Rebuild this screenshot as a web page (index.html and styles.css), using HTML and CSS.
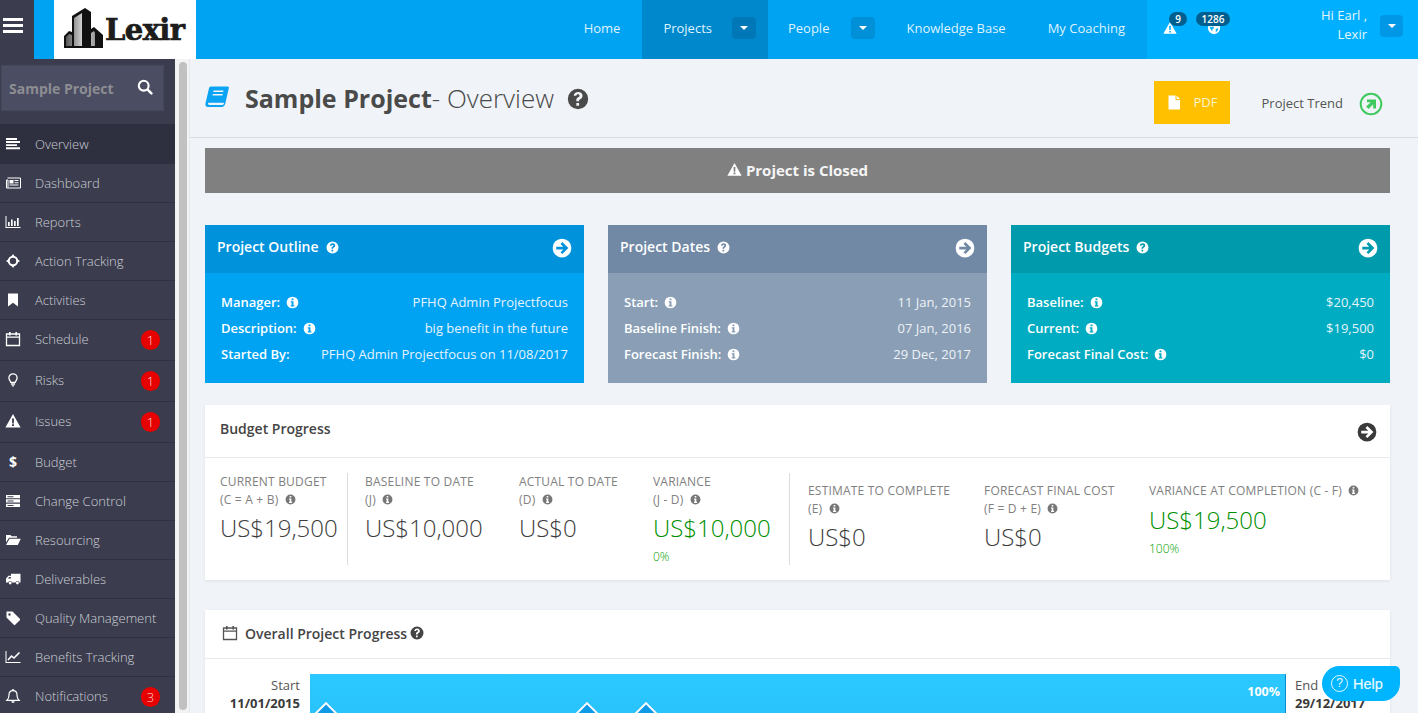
FILE: index.html
```html
<!DOCTYPE html>
<html lang="en">
<head>
<meta charset="utf-8">
<title>Sample Project - Overview</title>
<link rel="stylesheet" href="styles.css">
</head>
<body>
<svg class="defs" width="0" height="0" aria-hidden="true">
  <symbol id="i-info" viewBox="0 0 16 16"><path fill="currentColor" fill-rule="evenodd" d="M8 .8a7.2 7.2 0 1 0 0 14.4A7.2 7.2 0 1 0 8 .8zM6.8 3h2.4v2.2H6.8zM5.8 6.4h3.4v5h1.1v1.6H5.8v-1.6h1V8H5.8z"/></symbol>
  <symbol id="i-q" viewBox="0 0 16 16"><path fill="currentColor" fill-rule="evenodd" d="M8 .6a7.4 7.4 0 1 0 0 14.8A7.4 7.4 0 1 0 8 .6zM4.9 5.7C5 4 6.300 2.900 8.200 2.900c1.800 0 3.100 1.100 3.100 2.700 0 1.400-.9 2-1.700 2.500-.6.300-.8.600-.8 1v.5H6.800v-.8c0-1 .6-1.600 1.300-2 .6-.4 1-.6 1-1.200 0-.6-.5-1-1.100-1-.7 0-1.100.4-1.200 1.100zM6.800 10.900h2v2h-2z"/></symbol>
  <symbol id="i-arrow" viewBox="0 0 16 16"><path fill="currentColor" fill-rule="evenodd" d="M8 .5a7.500 7.500 0 1 0 0 15A7.500 7.500 0 1 0 8 .5zM8.300 3.200L13.100 8l-4.800 4.800-1.500-1.500 2.200-2.200H3.400V6.900H9L6.800 4.700z"/></symbol>
  <symbol id="i-warn" viewBox="0 0 16 16"><path fill="currentColor" fill-rule="evenodd" d="M8 1L15.600 14.600H.4zM7 5.400l.2 5h1.600l.2-5zM7 11.300v1.800h2v-1.800z"/></symbol>
  <symbol id="i-cal" viewBox="0 0 16 16"><path fill="none" stroke="currentColor" stroke-width="1.300" d="M1.500 3h13v11.500h-13zM1.500 6.200h13"/><path fill="currentColor" d="M4 1h1.600v3.400H4zM10.400 1H12v3.400h-1.600z"/></symbol>
  <symbol id="i-bars" viewBox="0 0 16 16"><path fill="currentColor" d="M1 2h11v1.900H1zM1 5.100h14V7H1zM1 8.200h11v1.900H1zM1 11.300h14v1.900H1z"/></symbol>
  <symbol id="i-news" viewBox="0 0 16 16"><path fill="none" stroke="currentColor" stroke-width="1" d="M2.500 3h13v10h-14V5h1.500v7.500"/><path fill="currentColor" d="M4.500 5h4v3.500h-4zM9.500 5h4v1h-4zM9.500 7.300h4v1h-4zM4.500 9.600h9v1h-9z"/></symbol>
  <symbol id="i-chart" viewBox="0 0 16 16"><path fill="currentColor" d="M.5 2h1v11h14v1H.5zM3 8h1.700v4H3zM6 5.500h1.700V12H6zM9 7h1.700v5H9zM12 4h1.700v8H12z"/></symbol>
  <symbol id="i-cross" viewBox="0 0 16 16"><circle cx="8" cy="8" r="4.200" fill="none" stroke="currentColor" stroke-width="2"/><path fill="currentColor" d="M8 1l2 3H6zM8 15l-2-3h4zM1 8l3-2v4zM15 8l-3 2V6z"/></symbol>
  <symbol id="i-mark" viewBox="0 0 16 16"><path fill="currentColor" d="M3 1.500h10v13L8 10.700l-5 3.800z"/></symbol>
  <symbol id="i-bulb" viewBox="0 0 16 16"><path fill="none" stroke="currentColor" stroke-width="1.300" d="M5.800 10.300C5.500 9 3.900 8 3.900 5.800 3.900 3.500 5.700 1.800 8 1.800s4.100 1.700 4.100 4c0 2.200-1.600 3.200-1.900 4.500z"/><path fill="currentColor" d="M5.900 11.300h4.200v1.400H5.900zM6.600 13.300h2.800l-.6 1.200H7.200z"/></symbol>
  <symbol id="i-server" viewBox="0 0 16 16"><path fill="currentColor" d="M1 2h14v3.300H1zM1 6.300h14v3.300H1zM1 10.700h14V14H1z"/><path fill="#3b3d4e" d="M2.500 3.200h6v1h-6zM2.500 7.500h6v1h-6zM2.500 11.900h6v1h-6z"/></symbol>
  <symbol id="i-folder" viewBox="0 0 16 16"><path fill="currentColor" d="M1 3h4.500l1.200 1.300H12v1.500H4L1 10.500zM4.600 6.800H15.800L12.800 13H1z"/></symbol>
  <symbol id="i-truck" viewBox="0 0 16 16"><path fill="currentColor" d="M6 2.800h9.500v8.700h-1.200a1.900 1.900 0 0 0-3.700 0H7a1.900 1.900 0 0 0-3.700 0H1V7.500l2.500-2.700H6zM2.700 7.600h3.200V5.900H4.200z"/><circle cx="5.200" cy="12" r="1.400" fill="currentColor"/><circle cx="12.400" cy="12" r="1.400" fill="currentColor"/></symbol>
  <symbol id="i-tag" viewBox="0 0 16 16"><path fill="currentColor" fill-rule="evenodd" d="M1.500 1.500h6l7.300 7.300a1 1 0 0 1 0 1.400l-4.600 4.600a1 1 0 0 1-1.400 0L1.500 7.500zM4.500 3.300a1.200 1.200 0 1 0 0 2.400 1.200 1.200 0 0 0 0-2.400z"/></symbol>
  <symbol id="i-line" viewBox="0 0 16 16"><path fill="currentColor" d="M.5 2h1v11h14v1H.5z"/><path fill="none" stroke="currentColor" stroke-width="1.600" d="M3 11l3.500-4 2.500 2 5.500-5.500"/></symbol>
  <symbol id="i-bell" viewBox="0 0 16 16"><path fill="none" stroke="currentColor" stroke-width="1.200" d="M2 12.300c1.500-1.400 2-2.600 2-5.300 0-2.500 1.700-4.300 4-4.300s4 1.800 4 4.300c0 2.700.5 3.900 2 5.300z"/><path fill="currentColor" d="M7.200 1h1.600v1.500H7.200zM6.300 13.300h3.400A1.700 1.700 0 0 1 6.300 13.300z"/></symbol>
  <symbol id="i-search" viewBox="0 0 16 16"><circle cx="6.700" cy="6.700" r="4.900" fill="none" stroke="currentColor" stroke-width="2.100"/><path fill="none" stroke="currentColor" stroke-width="2.500" stroke-linecap="round" d="M10.600 10.600l3.800 3.800"/></symbol>
  <symbol id="i-globe" viewBox="0 0 16 16"><path fill="currentColor" fill-rule="evenodd" d="M8 1a7 7 0 1 0 0 14A7 7 0 1 0 8 1zM3 6l2 1 2-1 1 2-2 2v2L4 9zM10 9l3-1-1 3-2 2z"/></symbol>
  <symbol id="i-file" viewBox="0 0 16 16"><path fill="currentColor" d="M2.500 1h7v4.500H14V15H2.500zM10.500 1l3.500 3.500h-3.500z"/></symbol>
  <symbol id="i-up" viewBox="0 0 24 24"><circle cx="12" cy="12" r="10.300" fill="none" stroke="currentColor" stroke-width="2"/><path fill="currentColor" d="M8 7.500h9v9h-2.800v-4.300l-4.700 4.700-2.400-2.400 4.700-4.200H8z"/></symbol>
</svg>

<div class="app">
  <header class="topbar">
    <button class="burger" aria-label="Menu"><span></span><span></span><span></span></button>
    <div class="brand-gap"></div>
    <div class="logo">
      <svg class="logo-mark" viewBox="0 0 40 40" width="40" height="40" aria-hidden="true">
        <defs><linearGradient id="glass" x1="0" x2="1" y1="0" y2="0"><stop offset="0" stop-color="#555"/><stop offset=".6" stop-color="#ddd"/><stop offset="1" stop-color="#999"/></linearGradient></defs>
        <path fill="#111" d="M0 28l5-5 3 1V8L21 0l6 4v17l3-2 9 8v13H0z"/>
        <path fill="url(#glass)" d="M2 29l3-3 3 1v11H2zM10 10l8-5v33h-8zM27 25l3-2 1 2v13h-4z"/>
      </svg>
      <span class="logo-text">Lexir</span>
    </div>
    <div class="top-space"></div>
    <nav class="nav">
      <a class="nav-item nav-home">Home</a>
      <a class="nav-item nav-item-drop is-active">Projects <span class="caret-btn"><i></i></span></a>
      <a class="nav-item nav-item-drop nav-people">People <span class="caret-btn"><i></i></span></a>
      <a class="nav-item">Knowledge Base</a>
      <a class="nav-item nav-last">My Coaching</a>
    </nav>
    <div class="top-right">
      <div class="alert">
        <svg class="alert-icon"><use href="#i-warn"/></svg>
        <span class="pill pill-a">9</span>
      </div>
      <div class="alert alert-globe">
        <svg class="alert-icon"><use href="#i-globe"/></svg>
        <span class="pill pill-b">1286</span>
      </div>
      <div class="user"><span>Hi Earl ,</span><span>Lexir</span></div>
      <span class="caret-btn caret-user"><i></i></span>
    </div>
  </header>

  <div class="body">
    <aside class="sidebar">
      <div class="search"><span>Sample Project</span><svg class="search-icon"><use href="#i-search"/></svg></div>
      <ul class="menu">
        <li class="menu-item is-current"><svg class="mi"><use href="#i-bars"/></svg>Overview</li>
        <li class="menu-item"><svg class="mi"><use href="#i-news"/></svg>Dashboard</li>
        <li class="menu-item"><svg class="mi"><use href="#i-chart"/></svg>Reports</li>
        <li class="menu-item"><svg class="mi"><use href="#i-cross"/></svg>Action Tracking</li>
        <li class="menu-item"><svg class="mi"><use href="#i-mark"/></svg>Activities</li>
        <li class="menu-item has-badge"><svg class="mi"><use href="#i-cal"/></svg>Schedule<b class="badge">1</b></li>
        <li class="menu-item has-badge"><svg class="mi"><use href="#i-bulb"/></svg>Risks<b class="badge">1</b></li>
        <li class="menu-item has-badge"><svg class="mi"><use href="#i-warn"/></svg>Issues<b class="badge">1</b></li>
        <li class="menu-item"><span class="mi mi-text">$</span>Budget</li>
        <li class="menu-item"><svg class="mi"><use href="#i-server"/></svg>Change Control</li>
        <li class="menu-item"><svg class="mi"><use href="#i-folder"/></svg>Resourcing</li>
        <li class="menu-item"><svg class="mi"><use href="#i-truck"/></svg>Deliverables</li>
        <li class="menu-item"><svg class="mi"><use href="#i-tag"/></svg>Quality Management</li>
        <li class="menu-item"><svg class="mi"><use href="#i-line"/></svg>Benefits Tracking</li>
        <li class="menu-item has-badge"><svg class="mi"><use href="#i-bell"/></svg>Notifications<b class="badge">3</b></li>
      </ul>
    </aside>
    <div class="scrolltrack"><div class="scrollthumb"></div></div>

    <main class="main">
      <div class="titlebar">
        <svg class="title-book" viewBox="0 0 24 22" aria-hidden="true"><path fill="#0ba3f3" d="M6 .5h16.500c1 0 1.500.7 1.300 1.700l-3.500 15.300c-.4 1.800-1.700 3.500-3.800 3.500H3C.9 21 0 19.300.5 17.300L4 2.300C4.300 1.200 5 .5 6 .5zM3.200 16.800c-.4 1.300.1 2.200 1.200 2.200h12.800c.9 0 1.500-.6 1.700-1.500l.1-.7zM8.500 4.500l-.3 1.400h10l.3-1.400zM7.800 8l-.3 1.400h10L17.800 8z" fill-rule="evenodd"/></svg>
        <h1 class="title"><strong>Sample Project</strong>- Overview</h1>
        <svg class="title-q"><use href="#i-q"/></svg>
        <div class="title-space"></div>
        <button class="pdf"><svg class="pdf-icon"><use href="#i-file"/></svg>PDF</button>
        <span class="trend">Project Trend</span>
        <svg class="trend-icon"><use href="#i-up"/></svg>
      </div>

      <div class="content">
        <div class="closed"><svg class="closed-icon"><use href="#i-warn"/></svg>Project is Closed</div>

        <section class="cards">
          <article class="card card-blue">
            <header class="card-head"><span>Project Outline</span><svg class="ci-q"><use href="#i-q"/></svg><svg class="ci-arrow"><use href="#i-arrow"/></svg></header>
            <dl class="card-body">
              <div class="row"><dt>Manager: <svg class="ci-i"><use href="#i-info"/></svg></dt><dd>PFHQ Admin Projectfocus</dd></div>
              <div class="row"><dt>Description: <svg class="ci-i"><use href="#i-info"/></svg></dt><dd>big benefit in the future</dd></div>
              <div class="row"><dt>Started By:</dt><dd>PFHQ Admin Projectfocus on 11/08/2017</dd></div>
            </dl>
          </article>
          <article class="card card-slate">
            <header class="card-head"><span>Project Dates</span><svg class="ci-q"><use href="#i-q"/></svg><svg class="ci-arrow"><use href="#i-arrow"/></svg></header>
            <dl class="card-body">
              <div class="row"><dt>Start: <svg class="ci-i"><use href="#i-info"/></svg></dt><dd>11 Jan, 2015</dd></div>
              <div class="row"><dt>Baseline Finish: <svg class="ci-i"><use href="#i-info"/></svg></dt><dd>07 Jan, 2016</dd></div>
              <div class="row"><dt>Forecast Finish: <svg class="ci-i"><use href="#i-info"/></svg></dt><dd>29 Dec, 2017</dd></div>
            </dl>
          </article>
          <article class="card card-teal">
            <header class="card-head"><span>Project Budgets</span><svg class="ci-q"><use href="#i-q"/></svg><svg class="ci-arrow"><use href="#i-arrow"/></svg></header>
            <dl class="card-body">
              <div class="row"><dt>Baseline: <svg class="ci-i"><use href="#i-info"/></svg></dt><dd>$20,450</dd></div>
              <div class="row"><dt>Current: <svg class="ci-i"><use href="#i-info"/></svg></dt><dd>$19,500</dd></div>
              <div class="row"><dt>Forecast Final Cost: <svg class="ci-i"><use href="#i-info"/></svg></dt><dd>$0</dd></div>
            </dl>
          </article>
        </section>

        <section class="panel">
          <header class="panel-head"><span>Budget Progress</span><svg class="panel-arrow"><use href="#i-arrow"/></svg></header>
          <div class="stats">
            <div class="stat stat-1"><p class="stat-label">CURRENT BUDGET<br>(C = A + B) <svg class="si"><use href="#i-info"/></svg></p><p class="stat-value">US$19,500</p></div>
            <div class="stat stat-2"><p class="stat-label">BASELINE TO DATE<br>(J) <svg class="si"><use href="#i-info"/></svg></p><p class="stat-value">US$10,000</p></div>
            <div class="stat stat-3"><p class="stat-label">ACTUAL TO DATE<br>(D) <svg class="si"><use href="#i-info"/></svg></p><p class="stat-value">US$0</p></div>
            <div class="stat stat-4"><p class="stat-label">VARIANCE<br>(J - D) <svg class="si"><use href="#i-info"/></svg></p><p class="stat-value is-good">US$10,000</p><p class="stat-pct">0%</p></div>
            <div class="stat stat-5"><p class="stat-label">ESTIMATE TO COMPLETE<br>(E) <svg class="si"><use href="#i-info"/></svg></p><p class="stat-value">US$0</p></div>
            <div class="stat stat-6"><p class="stat-label">FORECAST FINAL COST<br>(F = D + E) <svg class="si"><use href="#i-info"/></svg></p><p class="stat-value">US$0</p></div>
            <div class="stat stat-7"><p class="stat-label">VARIANCE AT COMPLETION (C - F) <svg class="si"><use href="#i-info"/></svg></p><p class="stat-value is-good">US$19,500</p><p class="stat-pct">100%</p></div>
          </div>
        </section>

        <section class="panel panel-progress">
          <header class="panel-head panel-head-b"><svg class="pg-cal"><use href="#i-cal"/></svg><span>Overall Project Progress</span><svg class="pg-q"><use href="#i-q"/></svg></header>
          <div class="timeline">
            <div class="tl-date tl-start"><span>Start</span><b>11/01/2015</b></div>
            <div class="tl-bar">
              <span class="tl-pct">100%</span>
              <i class="diamond diamond-a"></i><i class="diamond diamond-b"></i><i class="diamond diamond-c"></i>
            </div>
            <div class="tl-date tl-end"><span>End</span><b>29/12/2017</b></div>
          </div>
        </section>
      </div>
    </main>
  </div>

  <button class="help"><span class="help-q">?</span>Help</button>
</div>
</body>
</html>
```

FILE: styles.css
```css
* { box-sizing: border-box; }
html, body { margin: 0; padding: 0; height: 100%; overflow: hidden; }
body { font-family: "Open Sans", "Liberation Sans", sans-serif; font-size: 13px; color: #555; background: #f0f4f8; }
.defs { position: absolute; }
p, h1, dl, dd, ul { margin: 0; padding: 0; }
.app { height: 713px; display: flex; flex-direction: column; position: relative; overflow: hidden; }

/* top bar */
.topbar { height: 59px; flex: none; display: flex; background: #00a2f2; }
.burger { width: 34px; flex: none; background: #3b3d4e; border: 0; padding: 18px 7px 0 3px; display: flex; flex-direction: column; gap: 3px; }
.burger span { display: block; height: 3px; background: #fff; width: 20px; }
.brand-gap { width: 20px; flex: none; }
.logo { width: 142px; flex: none; background: #fff; display: flex; align-items: center; padding: 7px 0 0 10px; }
.logo-mark { flex: none; width: 40px; height: 40px; margin-top: -10px; }
.logo-text { font-family: "DejaVu Serif", serif; font-weight: 700; font-size: 29px; color: #1c1c1c; letter-spacing: -.6px; margin-left: 1px; -webkit-text-stroke: .7px #1c1c1c; margin-top: -7px; }
.top-space { flex: 1; }
.nav { display: flex; flex: none; }
.nav-item { display: flex; align-items: center; padding: 0 21px 4px; color: #dff3ff; font-size: 13px; }
.nav-home { padding-right: 22px; }
.nav-item-drop { padding: 0 12px 4px 21px; }
.nav-people { padding: 0 10px 4px 20px; }
.nav-last { padding-right: 22px; }
.nav-item.is-active { background: #0088cc; }
.caret-btn { display: inline-flex; align-items: center; justify-content: center; width: 24px; height: 22px; border-radius: 4px; background: #0090d8; margin-left: 20px; }
.nav-people .caret-btn { margin-left: 22px; }
.is-active .caret-btn { background: #0077b6; }
.caret-btn i { display: block; border: 4px solid transparent; border-top: 4px solid #fff; border-bottom: 0; width: 0; height: 0; }
.top-right { width: 271px; flex: none; background: #00b0ff; display: flex; position: relative; padding-left: 16px; }
.alert { position: relative; width: 44px; }
.alert-icon { position: absolute; left: 0; top: 21px; width: 14px; height: 14px; color: #fff; }
.pill { position: absolute; top: 12px; height: 14px; border-radius: 7px; background: #005f8f; color: #fff; font-size: 10px; font-weight: 600; line-height: 14px; text-align: center; }
.pill-a { left: 6px; width: 18px; }
.pill-b { left: -11px; width: 34px; }
.user { width: 116px; display: flex; flex-direction: column; align-items: flex-end; padding-top: 6px; color: #e3f5ff; font-size: 13px; line-height: 19px; }
.caret-user { position: absolute; left: 233px; top: 15px; margin: 0; background: #0098e6; width: 23px; }

/* layout */
.body { flex: 1; display: flex; min-height: 0; }
.sidebar { width: 175px; flex: none; background: #3b3d4e; padding-top: 6px; overflow: hidden; }
.search { margin-left: 1px; width: 163px; height: 46px; background: #4b4d63; border: 1px solid #44465a; display: flex; align-items: center; justify-content: space-between; padding: 0 10px 0 7px; color: #8d8d92; font-weight: 700; font-size: 14px; }
.search-icon { width: 16px; height: 16px; color: #fff; margin-top: -2px; }
.menu { list-style: none; margin-top: 13px; }
.menu-item { height: 39px; display: flex; align-items: center; color: #ccced6; font-weight: 300; font-size: 13px; border-bottom: 1px solid #2f3141; position: relative; }
.menu-item.has-badge { height: 41px; padding-bottom: 2px; }
.menu-item.is-current { background: #2e3040; height: 40px; }
.mi { width: 16px; height: 16px; flex: none; margin: 0 14px 0 5px; color: #fff; }
.mi-text { display: block; text-align: center; font-weight: 700; font-size: 14px; line-height: 16px; }
.badge { margin: 2px 15px 0 auto; width: 19px; height: 20px; border-radius: 10px; background: #e60000; color: #ffd9d9; font-weight: 300; font-size: 13px; line-height: 20px; text-align: center; }
.scrolltrack { width: 15px; flex: none; background: #f3f3f3; border-right: 1px solid #e6e8ea; padding: 3px 2px 0 4px; }
.scrollthumb { height: 648px; background: #c1c1c1; border-radius: 4px; }
.main { flex: 1; min-width: 0; overflow: hidden; }

/* title bar */
.titlebar { height: 79px; border-bottom: 1px solid #d9dde2; display: flex; align-items: center; padding-left: 15px; padding-right: 35px; }
.title-book { width: 24px; height: 22px; flex: none; margin-top: -2px; }
.title { margin: 0 0 0 16px; font-size: 26px; font-weight: 300; color: #4a4a4a; white-space: nowrap; line-height: 32px; }
.title strong { font-weight: 700; font-size: 25px; }
.title-q { width: 22px; height: 22px; margin-left: 13px; color: #4a4a4a; margin-top: 1px; }
.title-space { flex: 1; }
.pdf { width: 76px; height: 43px; background: #ffc000; border: 0; color: #fff3cf; font-family: inherit; font-size: 13px; display: flex; align-items: center; padding: 0 0 0 12px; gap: 12px; margin-top: 8px; }
.pdf-icon { width: 16px; height: 17px; color: #fff; }
.trend { margin-left: 32px; font-size: 13px; color: #555; margin-top: 9px; }
.trend-icon { width: 24px; height: 24px; margin-left: 16px; color: #3fc95e; margin-top: 12px; }

/* content */
.content { padding: 10px 28px 0 15px; }
.closed { height: 45px; background: #808080; color: #f5f5f5; font-weight: 700; font-size: 15px; display: flex; align-items: center; justify-content: center; gap: 4px; padding-bottom: 2px; }
.closed-icon { width: 15px; height: 15px; color: #fff; margin-top: -1px; }
.cards { display: grid; grid-template-columns: repeat(3, 379px); column-gap: 24px; margin-top: 32px; }
.card { height: 158px; color: #fff; }
.card-head { height: 48px; display: flex; align-items: center; padding: 0 12px; font-weight: 600; font-size: 14px; }
.card-head span { margin-bottom: 6px; }
.ci-q { width: 13px; height: 13px; margin: 0 0 4px 7px; color: #fff; }
.ci-arrow { width: 20px; height: 20px; margin: 0 0 2px auto; color: #fff; }
.card-body { padding: 16px 16px 0; }
.row { display: flex; justify-content: space-between; align-items: center; height: 26px; font-size: 13px; }
.row dt { font-weight: 600; display: flex; align-items: center; gap: 6px; white-space: nowrap; }
.row dd { font-weight: 400; color: #e6f4ff; white-space: nowrap; }
.ci-i { width: 13px; height: 13px; color: #fff; }
.card-blue { background: #00a2f2; }
.card-blue .card-head { background: #0093dc; }
.card-slate { background: #8a9fb6; }
.card-slate .card-head { background: #7189a5; }
.card-slate .row dd { color: #eef2f7; }
.card-teal { background: #00acc1; }
.card-teal .card-head { background: #009aad; }

/* panels */
.panel { background: #fff; margin-top: 22px; box-shadow: 0 1px 3px rgba(0,0,0,.08); }
.panel-head { height: 53px; border-bottom: 1px solid #e8eaec; display: flex; align-items: center; justify-content: space-between; padding: 0 13px 0 15px; font-weight: 600; font-size: 14px; color: #444; }
.panel-head > span { margin-bottom: 6px; }
.panel-arrow { width: 20px; height: 20px; color: #3a3a3a; margin-top: 1px; }
.stats { height: 122px; display: flex; padding: 15px 0 0 15px; position: relative; }
.stat { flex: none; height: 92px; }
.stat-label { font-size: 12px; line-height: 18px; color: #808080; white-space: nowrap; letter-spacing: .2px; }
.si { width: 11px; height: 11px; color: #777; margin-left: 3px; vertical-align: -1px; }
.stat-value { font-size: 24px; line-height: 32px; color: #3d3d3d; font-weight: 300; margin-top: 3px; white-space: nowrap; }
.stat-value.is-good { color: #008f00; }
.stat-pct { font-size: 12px; color: #00a000; font-weight: 300; margin-top: 4px; line-height: 18px; }
.stat-1 { width: 128px; border-right: 1px solid #dcdcdc; }
.stat-2 { width: 171px; padding-left: 17px; }
.stat-3 { width: 134px; }
.stat-4 { width: 137px; border-right: 1px solid #dcdcdc; }
.stat-5 { width: 194px; padding: 9px 0 0 18px; }
.stat-6 { width: 165px; padding-top: 9px; }
.stat-7 { width: 240px; padding-top: 9px; }
.stat-7 .stat-value { margin-top: 4px; }
.panel-progress { margin-top: 30px; }
.panel-head-b { height: 49px; justify-content: flex-start; padding-left: 17px; }
.panel-head-b > span { margin-bottom: 2px; }
.pg-cal { width: 16px; height: 16px; color: #555; margin-right: 7px; margin-top: -2px; }
.pg-q { width: 14px; height: 14px; color: #444; margin: 0 0 2px 3px; }
.timeline { display: flex; padding-top: 15px; height: 120px; }
.tl-date { display: flex; flex-direction: column; font-size: 13px; line-height: 18px; padding-top: 2px; color: #555; }
.tl-date b { color: #3a3a3a; font-weight: 700; }
.tl-start { width: 95px; text-align: right; }
.tl-end { padding-left: 9px; }
.tl-bar { width: 976px; margin-left: 10px; height: 90px; background: linear-gradient(#2bc8ff, #25bdf7); border-right: 1px solid #0b8ccf; position: relative; flex: none; }
.tl-pct { position: absolute; right: 5px; top: 9px; color: #fff; font-weight: 700; font-size: 12.500px; }
.diamond { position: absolute; top: 31px; width: 16px; height: 16px; background: #0e9ae6; border: 2px solid #fff; transform: rotate(45deg); }
.diamond-a { left: 8px; }
.diamond-b { left: 269px; }
.diamond-c { left: 328px; }

/* help */
.help { position: absolute; left: 1322px; top: 666px; width: 78px; height: 35px; border: 0; border-radius: 18px 5px 18px 18px; background: #00b5ff; color: #eafaff; font-family: "Liberation Sans", sans-serif; font-size: 14.500px; font-weight: 400; display: flex; align-items: center; padding: 0 0 0 9px; gap: 5px; -webkit-text-stroke: .2px #eafaff; }
.help-q { width: 17px; height: 17px; border: 1px solid #eafaff; border-radius: 50%; font-size: 12px; line-height: 15px; text-align: center; -webkit-text-stroke: 0; }
```
